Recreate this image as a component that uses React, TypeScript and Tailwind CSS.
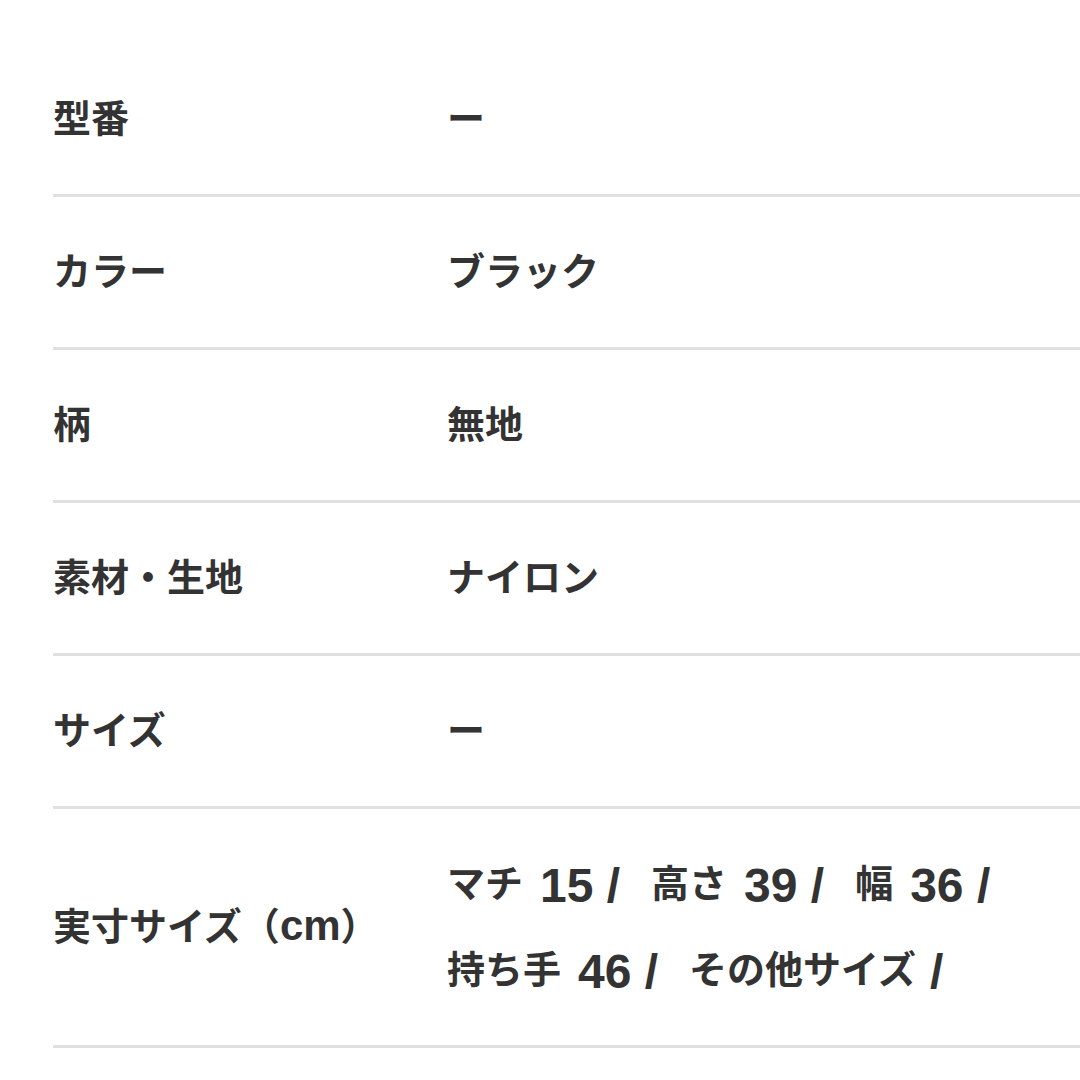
import React from 'react';

type Size = { name: string; num?: string };

const rows: { label: React.ReactNode; value: string | Size[] }[] = [
  { label: '型番', value: 'ー' },
  { label: 'カラー', value: 'ブラック' },
  { label: '柄', value: '無地' },
  { label: '素材・生地', value: 'ナイロン' },
  { label: 'サイズ', value: 'ー' },
  {
    label: (
      <>
        実寸サイズ（<span className="text-[42px] leading-none">cm</span>）
      </>
    ),
    value: [
      { name: 'マチ', num: '15' },
      { name: '高さ', num: '39' },
      { name: '幅', num: '36' },
      { name: '持ち手', num: '46' },
      { name: 'その他サイズ' },
    ],
  },
];

export default function App() {
  return (
    <div
      className="min-h-[1080px] w-[1080px] bg-white pt-[44px] pl-[53px] text-[#333] font-bold"
      style={{ fontFamily: '"Liberation Sans", "Noto Sans CJK JP", sans-serif' }}
    >
      <dl>
        {rows.map((row, i) => (
          <div
            key={i}
            className="grid grid-cols-[394px_1fr] items-center border-b-[3px] border-[#e0e0e0] py-[32px] text-[38px] leading-[86px]"
          >
            <dt>{row.label}</dt>
            <dd>
              {Array.isArray(row.value) ? (
                <div className="flex flex-wrap gap-x-[31px]">
                  {row.value.map((v) => (
                    <span key={v.name}>
                      {v.name}
                      {v.num ? (
                        <span className="ml-[17px] align-[-5px] text-[48px] leading-none">{v.num} /</span>
                      ) : (
                        <span className="ml-[14px] align-[-5px] text-[48px] leading-none">/</span>
                      )}
                    </span>
                  ))}
                </div>
              ) : (
                row.value
              )}
            </dd>
          </div>
        ))}
      </dl>
    </div>
  );
}
